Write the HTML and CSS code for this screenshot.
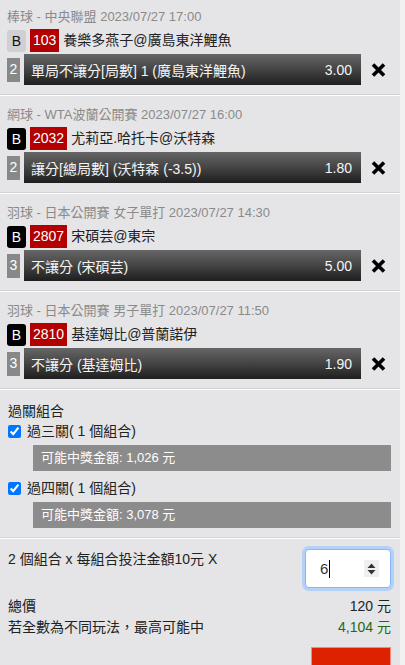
FILE: index.html
```html
<!DOCTYPE html>
<html>
	<head>
		<meta charset="utf-8">
		<title>投注單</title>
		<link rel="stylesheet" href="styles.css">
	</head>
	<body>
		<div class="slip">
			<!--單注列表-->
			<div class="bet">
				<div class="bet-head">棒球 - 中央聯盟 2023/07/27 17:00</div>
				<div class="bet-match">
					<span class="tag tag-light">B</span>
					<span class="code">103</span>
					<span class="teams">養樂多燕子@廣島東洋鯉魚</span>
				</div>
				<div class="bet-pick">
					<span class="num">2</span>
					<div class="pick">
						<span>單局不讓分[局數] 1 (廣島東洋鯉魚)</span>
						<span class="odds">3.00</span>
					</div>
					<a href="#" class="remove"><svg width="15" height="14" viewBox="0 0 15 14"><path d="M2 1.5 L13 12.5 M13 1.5 L2 12.5" stroke="#000" stroke-width="3.6" fill="none"/></svg></a>
				</div>
			</div>
			<div class="bet">
				<div class="bet-head">網球 - WTA波蘭公開賽 2023/07/27 16:00</div>
				<div class="bet-match">
					<span class="tag">B</span>
					<span class="code">2032</span>
					<span class="teams">尤莉亞.哈托卡@沃特森</span>
				</div>
				<div class="bet-pick">
					<span class="num">2</span>
					<div class="pick">
						<span>讓分[總局數] (沃特森 (-3.5))</span>
						<span class="odds">1.80</span>
					</div>
					<a href="#" class="remove"><svg width="15" height="14" viewBox="0 0 15 14"><path d="M2 1.5 L13 12.5 M13 1.5 L2 12.5" stroke="#000" stroke-width="3.6" fill="none"/></svg></a>
				</div>
			</div>
			<div class="bet">
				<div class="bet-head">羽球 - 日本公開賽 女子單打 2023/07/27 14:30</div>
				<div class="bet-match">
					<span class="tag">B</span>
					<span class="code">2807</span>
					<span class="teams">宋碩芸@東宗</span>
				</div>
				<div class="bet-pick">
					<span class="num">3</span>
					<div class="pick">
						<span>不讓分 (宋碩芸)</span>
						<span class="odds">5.00</span>
					</div>
					<a href="#" class="remove"><svg width="15" height="14" viewBox="0 0 15 14"><path d="M2 1.5 L13 12.5 M13 1.5 L2 12.5" stroke="#000" stroke-width="3.6" fill="none"/></svg></a>
				</div>
			</div>
			<div class="bet">
				<div class="bet-head">羽球 - 日本公開賽 男子單打 2023/07/27 11:50</div>
				<div class="bet-match">
					<span class="tag">B</span>
					<span class="code">2810</span>
					<span class="teams">基達姆比@普蘭諾伊</span>
				</div>
				<div class="bet-pick">
					<span class="num">3</span>
					<div class="pick">
						<span>不讓分 (基達姆比)</span>
						<span class="odds">1.90</span>
					</div>
					<a href="#" class="remove"><svg width="15" height="14" viewBox="0 0 15 14"><path d="M2 1.5 L13 12.5 M13 1.5 L2 12.5" stroke="#000" stroke-width="3.6" fill="none"/></svg></a>
				</div>
			</div>

			<!--過關組合-->
			<div class="combo">
				<div class="combo-title">過關組合</div>
				<label class="combo-item"><input type="checkbox" checked> 過三關( 1 個組合)</label>
				<div class="combo-win">可能中獎金額: 1,026 元</div>
				<label class="combo-item second"><input type="checkbox" checked> 過四關( 1 個組合)</label>
				<div class="combo-win">可能中獎金額: 3,078 元</div>
			</div>

			<!--金額-->
			<div class="total">
				<div class="stake">
					<span>2 個組合 x 每組合投注金額10元 X</span>
					<div class="qty">
						<span class="qty-val">6</span>
						<span class="spin"><svg width="9" height="12" viewBox="0 0 9 12"><path d="M4.5 0.5 L8.5 5 L0.5 5 Z M0.5 7 L8.5 7 L4.5 11.5 Z" fill="#333"/></svg></span>
					</div>
				</div>
				<div class="line line-first">
					<span>總價</span>
					<span>120 元</span>
				</div>
				<div class="line">
					<span>若全數為不同玩法，最高可能中</span>
					<span class="win">4,104 元</span>
				</div>
				<div class="submit-row">
					<a href="#" class="submit"></a>
				</div>
			</div>
		</div>
	</body>
</html>
```

FILE: styles.css
```css
* {
	margin: 0;
	padding: 0;
}

body {
	background-color: #f1f1f1;
	font-family: "Liberation Sans", "Noto Sans CJK TC", sans-serif;
	font-size: 14px;
	color: #222;
}

a {
	text-decoration: none;
}

.slip {
	width: 400px;
	min-height: 665px;
	background-color: #e5e5e7;
}

.bet {
	padding: 10px 0 9px 7px;
	border-top: 1px solid #fff;
	border-bottom: 1px solid #d2d2d4;
}

.bet:first-child {
	padding-top: 8px;
	border-top: 0;
}

.bet-head {
	font-size: 13px;
	line-height: 18px;
	color: #8a8a8a;
}

.bet-match {
	display: flex;
	align-items: center;
	height: 23px;
	margin-top: 3px;
}

.tag {
	display: inline-block;
	width: 19px;
	height: 22px;
	line-height: 22px;
	text-align: center;
	border-radius: 3px;
	background-color: #000;
	color: #fff;
}

.tag-light {
	background-color: #d0d0d2;
	color: #111;
}

.code {
	height: 23px;
	line-height: 23px;
	padding: 0 3px;
	margin-left: 4px;
	background-color: #b30000;
	color: #fff;
}

.teams {
	margin-left: 4px;
	line-height: 23px;
}

.bet-pick {
	display: flex;
	align-items: center;
	margin-top: 2px;
}

.num {
	width: 13px;
	height: 24px;
	line-height: 22px;
	text-align: center;
	background-color: #888;
	color: #fff;
}

.pick {
	display: flex;
	justify-content: space-between;
	align-items: center;
	width: 337px;
	height: 31px;
	margin-left: 4px;
	padding: 0 9px 0 7px;
	box-sizing: border-box;
	background: linear-gradient(#666, #444 50%, #1e1e1e);
	color: #f4f4f4;
}

.remove {
	display: flex;
	margin-left: 10px;
}

.combo {
	padding: 11px 9px 9px 8px;
	border-top: 1px solid #fff;
	border-bottom: 1px solid #d2d2d4;
}

.combo-title {
	line-height: 20px;
}

.combo-item {
	display: flex;
	align-items: center;
	line-height: 20px;
}

.combo-item input {
	width: 13px;
	height: 13px;
	margin: 0 6px 0 0;
}

.combo-item.second {
	margin-top: 7px;
}

.combo-win {
	height: 26px;
	line-height: 26px;
	margin: 4px 0 0 25px;
	padding-left: 8px;
	font-size: 13px;
	background-color: #8c8c8c;
	color: #fff;
}

.total {
	padding: 10px 9px 0 8px;
	border-top: 1px solid #fff;
}

.stake {
	display: flex;
	justify-content: space-between;
	align-items: flex-start;
	line-height: 20px;
}

.qty {
	display: flex;
	align-items: center;
	justify-content: space-between;
	width: 86px;
	height: 39px;
	padding: 0 11px 0 14px;
	box-sizing: border-box;
	border: 1px solid #86b7fe;
	border-radius: 4px;
	box-shadow: 0 0 0 3px #b6d1f7;
	background-color: #fff;
	font-size: 15px;
}

.qty-val {
	line-height: 18px;
	padding-right: 1px;
	border-right: 1px solid #000;
	color: #333;
}

.spin {
	display: flex;
	align-items: center;
	justify-content: center;
	width: 15px;
	height: 17px;
	background-color: #efefef;
}

.line {
	display: flex;
	justify-content: space-between;
	line-height: 21px;
}

.line-first {
	margin-top: 8px;
}

.win {
	color: #1f6b12;
}

.submit-row {
	display: flex;
	justify-content: flex-end;
	margin-top: 9px;
}

.submit {
	display: block;
	width: 80px;
	height: 36px;
	box-sizing: border-box;
	border: 1px solid #f08a80;
	background-color: #dd2200;
}
```
